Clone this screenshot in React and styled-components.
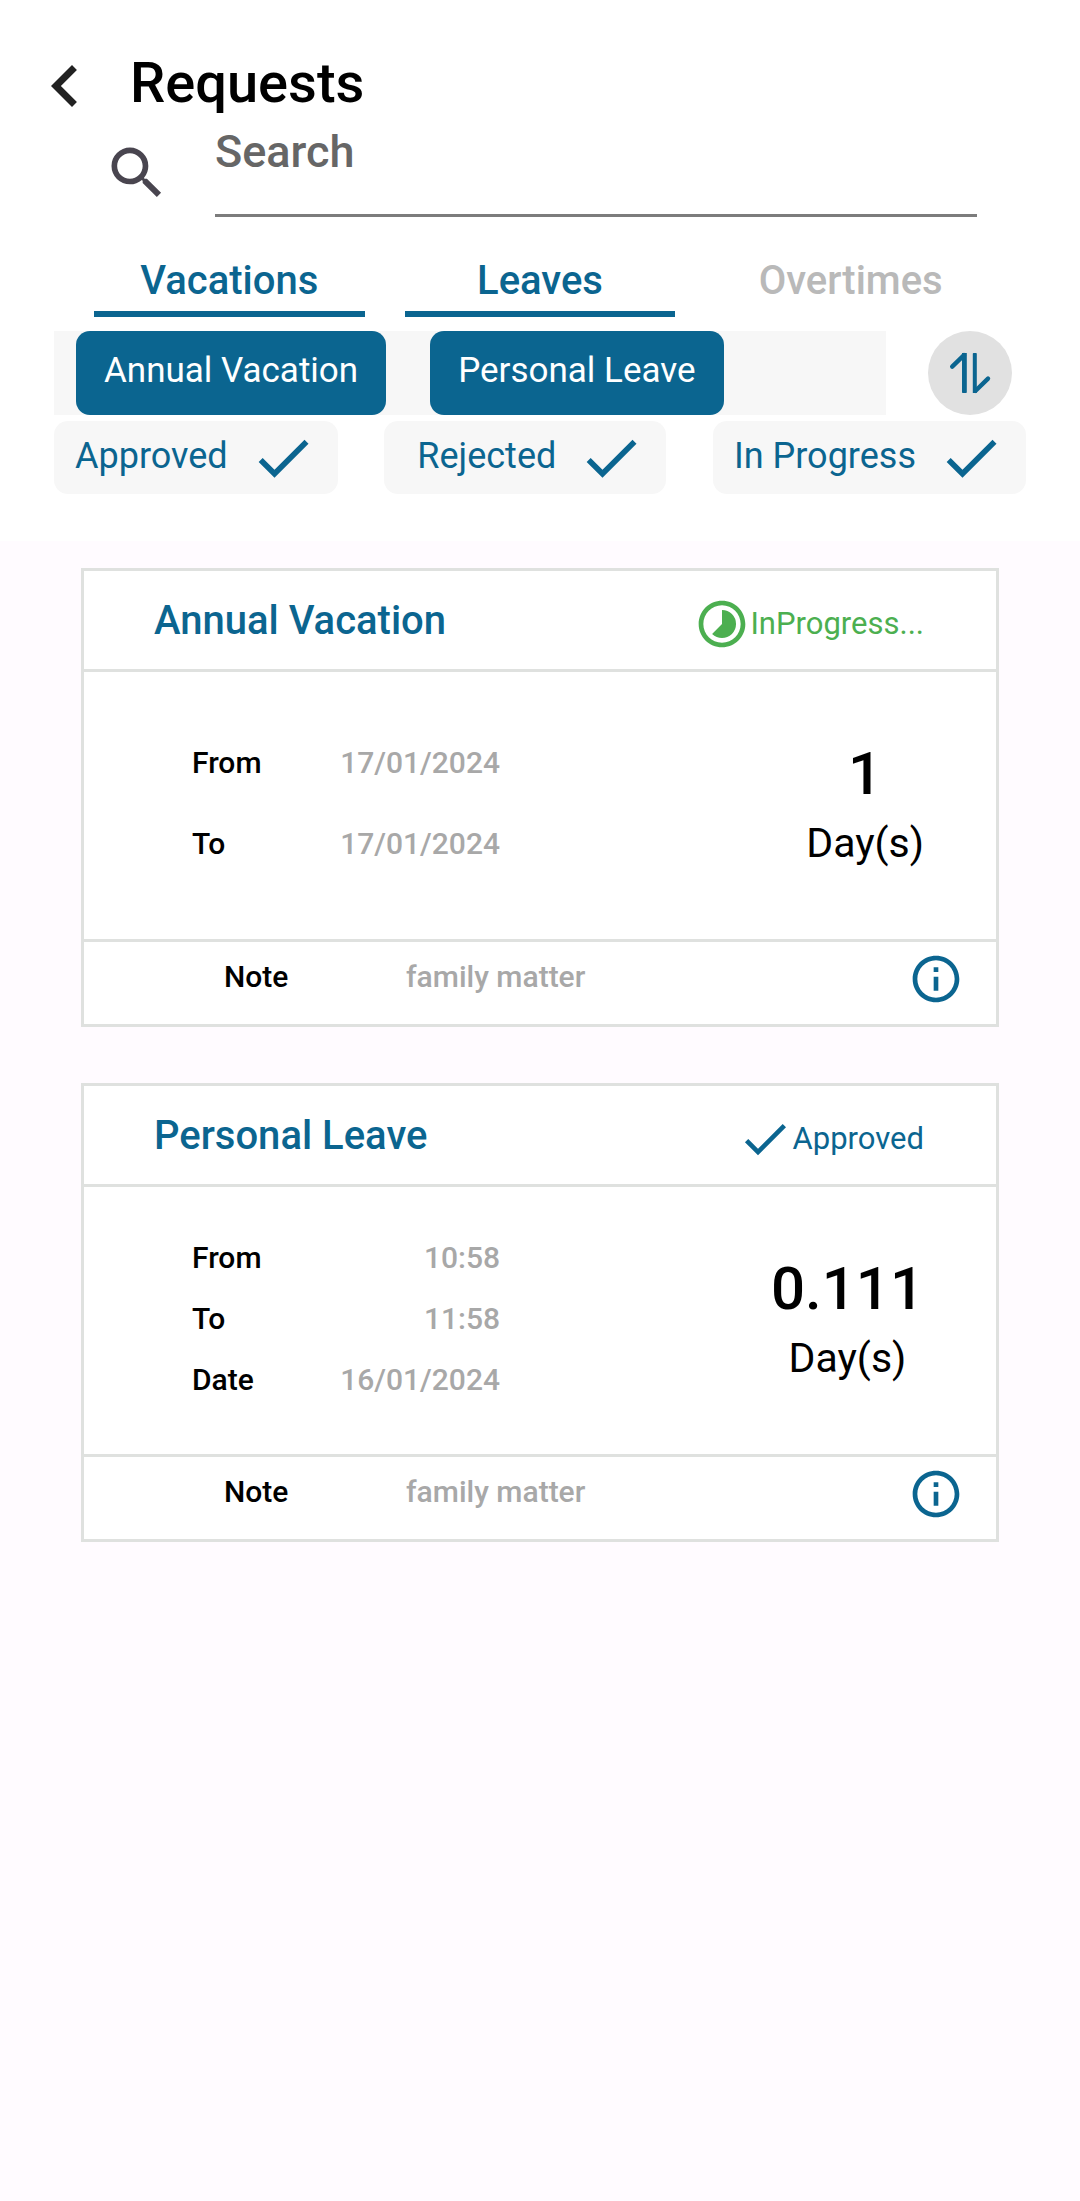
import React, { useState } from "react";
import styled, { createGlobalStyle } from "styled-components";

const BLUE = "#0b6590";

const GlobalStyle = createGlobalStyle`
  *, *::before, *::after { box-sizing: border-box; }
  body {
    margin: 0;
    background: #fffbff;
    color: #000;
    font-family: Roboto, "Liberation Sans", sans-serif;
  }
  button, input { font: inherit; color: inherit; }
  button { border: 0; padding: 0; background: none; cursor: pointer; }
  h1, h2, p, dl, dt, dd { margin: 0; font-weight: 500; }
`;

const Icon = styled.svg.attrs({ viewBox: "0 0 24 24", "aria-hidden": true })`
  display: block;
  flex: none;
  width: ${(p) => p.$size}px;
  height: ${(p) => p.$size}px;
  fill: currentColor;
`;

const BackIcon = () => (
  <Icon $size={84}>
    <path d="M15.41 7.41L14 6l-6 6 6 6 1.41-1.41L10.83 12z" />
  </Icon>
);

const SearchIcon = () => (
  <Icon $size={68}>
    <path d="M15.5 14h-.79l-.28-.27A6.471 6.471 0 0 0 16 9.5 6.5 6.5 0 1 0 9.5 16c1.61 0 3.09-.59 4.23-1.57l.27.28v.79l5 4.99L20.49 19l-4.99-5zm-6 0C7.01 14 5 11.99 5 9.5S7.01 5 9.5 5 14 7.01 14 9.5 11.99 14 9.5 14z" />
  </Icon>
);

const CheckIcon = ({ size }) => (
  <Icon $size={size}>
    <path d="M9 16.17L4.83 12l-1.42 1.41L9 19 21 7l-1.41-1.41z" />
  </Icon>
);

const TimelapseIcon = () => (
  <Icon $size={56}>
    <path d="M16.24 7.76A5.974 5.974 0 0 0 12 6v6l-4.24 4.24c2.34 2.34 6.14 2.34 8.49 0a5.99 5.99 0 0 0-.01-8.48zM12 2C6.48 2 2 6.48 2 12s4.48 10 10 10 10-4.48 10-10S17.52 2 12 2zm0 18c-4.42 0-8-3.58-8-8s3.58-8 8-8 8 3.58 8 8-3.58 8-8 8z" />
  </Icon>
);

const InfoIcon = () => (
  <Icon $size={56}>
    <path d="M11 7h2v2h-2zm0 4h2v6h-2zm1-9C6.48 2 2 6.48 2 12s4.48 10 10 10 10-4.48 10-10S17.52 2 12 2zm0 18c-4.41 0-8-3.59-8-8s3.59-8 8-8 8 3.59 8 8-3.59 8-8 8z" />
  </Icon>
);

const SortIcon = () => (
  <Icon $size={48}>
    <path d="M8 2h2.4v19.6a.4.4 0 0 1-.4.4H8.4a.4.4 0 0 1-.4-.4zM13.4 2.4a.4.4 0 0 1 .4-.4h1.2a.4.4 0 0 1 .4.4V22h-2z" />
    <path
      d="M9 3.1 3.1 8.8M14.8 20.9 21 14.8"
      fill="none"
      stroke="currentColor"
      strokeWidth="2.2"
      strokeLinecap="round"
    />
  </Icon>
);

const Header = styled.header`
  background: #fff;
  padding: 44px 0 47px;
`;

const TitleRow = styled.div`
  display: flex;
  align-items: flex-start;
  gap: 23px;
  padding-left: 23px;
`;

const BackButton = styled.button`
  color: #222;
`;

const Title = styled.h1`
  font-size: 56px;
  line-height: 78px;
`;

const SearchRow = styled.div`
  display: flex;
  align-items: center;
  gap: 44px;
  padding: 0 103px;
  color: #49454f;
`;

const SearchInput = styled.input`
  flex: 1;
  min-width: 0;
  height: 89px;
  padding: 0 0 40px;
  border: 0;
  border-bottom: 3px solid #7c7c7c;
  border-radius: 0;
  outline: 0;
  background: none;
  font-size: 45px;
  font-weight: 500;
  line-height: 46px;
  &::placeholder {
    color: #666;
    opacity: 1;
  }
`;

const Tabs = styled.div`
  display: grid;
  grid-template-columns: repeat(3, 1fr);
  gap: 40px;
  padding: 40px 94px 0;
`;

const Tab = styled.button`
  padding-bottom: 6px;
  border-bottom: 6px solid ${(p) => (p.$active ? BLUE : "transparent")};
  color: ${(p) => (p.$active ? BLUE : "#b9b9b9")};
  font-size: 40px;
  font-weight: 500;
  line-height: 48px;
`;

const TypeRow = styled.div`
  display: flex;
  gap: 42px;
  padding: 14px 68px 0 54px;
`;

const TypeStrip = styled.div`
  display: flex;
  flex: 1;
  gap: 44px;
  padding-left: 22px;
  background: #f7f7f7;
`;

const TypeChip = styled.button`
  padding: 0 28px 4px;
  border-radius: 14px;
  background: ${BLUE};
  color: #fff;
  font-size: 35px;
  line-height: 80px;
  white-space: nowrap;
`;

const SortButton = styled.button`
  display: grid;
  place-items: center;
  width: 84px;
  height: 84px;
  border-radius: 50%;
  background: #e1e1e1;
  color: ${BLUE};
`;

const StatusRow = styled.div`
  display: flex;
  justify-content: space-between;
  padding: 6px 54px 0;
`;

const StatusChip = styled.button`
  display: flex;
  align-items: center;
  justify-content: flex-end;
  gap: 21px;
  min-width: 282px;
  height: 73px;
  padding: 0 21px;
  border-radius: 14px;
  background: #f7f7f7;
  color: ${BLUE};
  font-size: 36px;
  line-height: 68px;
  white-space: nowrap;
`;

const ChipText = styled.span`
  padding-bottom: 4px;
`;

const List = styled.main`
  display: grid;
  gap: 56px;
  padding: 27px 81px 56px;
`;

const Card = styled.article`
  border: 3px solid #dfe1df;
  background: #fff;
`;

const CardHead = styled.div`
  display: flex;
  align-items: center;
  justify-content: space-between;
  height: 98px;
  padding: 2px 72px 0 70px;
`;

const CardTitle = styled.h2`
  color: ${BLUE};
  font-size: 40px;
  line-height: 50px;
`;

const Status = styled.p`
  display: flex;
  align-items: center;
  padding-top: 6px;
  color: ${(p) => p.$color};
  font-size: 31px;
  font-weight: 400;
  line-height: 50px;
`;

const CardBody = styled.div`
  display: flex;
  align-items: center;
  justify-content: space-between;
  height: 273px;
  padding: 0 72px 0 108px;
  border: solid #dfe1df;
  border-width: 3px 0;
`;

const Period = styled.dl`
  display: flex;
  flex-direction: column;
  justify-content: space-evenly;
  width: 308px;
  height: 212px;
  padding-bottom: 4px;
`;

const PeriodRow = styled.div`
  display: flex;
  justify-content: space-between;
  font-size: 30px;
  line-height: 36px;
`;

const Value = styled.dd`
  color: #a8a8a8;
`;

const Amount = styled.div`
  text-align: center;
`;

const Count = styled.p`
  font-size: 60px;
  line-height: 74px;
`;

const Unit = styled.p`
  font-size: 41px;
  font-weight: 400;
  line-height: 64px;
`;

const CardFoot = styled.div`
  display: flex;
  align-items: center;
  justify-content: space-between;
  height: 82px;
  padding: 0 32px 9px 140px;
`;

const Note = styled.dl`
  display: grid;
  grid-template-columns: 182px auto;
  padding-bottom: 4px;
  font-size: 30px;
  line-height: 36px;
`;

const InfoButton = styled.button`
  color: ${BLUE};
`;

const TABS = ["Vacations", "Leaves", "Overtimes"];
const TYPES = ["Annual Vacation", "Personal Leave"];
const STATUSES = ["Approved", "Rejected", "In Progress"];

const REQUESTS = [
  {
    title: "Annual Vacation",
    status: "InProgress...",
    color: "#4caf50",
    icon: <TimelapseIcon />,
    rows: [["From", "17/01/2024"], ["To", "17/01/2024"]],
    count: "1",
    note: "family matter",
  },
  {
    title: "Personal Leave",
    status: "Approved",
    color: BLUE,
    icon: <CheckIcon size={56} />,
    rows: [["From", "10:58"], ["To", "11:58"], ["Date", "16/01/2024"]],
    count: "0.111",
    note: "family matter",
  },
];

function RequestCard({ request }) {
  return (
    <Card>
      <CardHead>
        <CardTitle>{request.title}</CardTitle>
        <Status $color={request.color}>
          {request.icon}
          {request.status}
        </Status>
      </CardHead>
      <CardBody>
        <Period>
          {request.rows.map(([label, value]) => (
            <PeriodRow key={label}>
              <dt>{label}</dt>
              <Value>{value}</Value>
            </PeriodRow>
          ))}
        </Period>
        <Amount>
          <Count>{request.count}</Count>
          <Unit>Day(s)</Unit>
        </Amount>
      </CardBody>
      <CardFoot>
        <Note>
          <dt>Note</dt>
          <Value>{request.note}</Value>
        </Note>
        <InfoButton type="button" aria-label="Details">
          <InfoIcon />
        </InfoButton>
      </CardFoot>
    </Card>
  );
}

export default function App() {
  const [active, setActive] = useState(["Vacations", "Leaves"]);
  const toggle = (name) =>
    setActive((list) =>
      list.includes(name) ? list.filter((n) => n !== name) : [...list, name]
    );

  return (
    <>
      <GlobalStyle />
      <Header>
        <TitleRow>
          <BackButton type="button" aria-label="Back">
            <BackIcon />
          </BackButton>
          <Title>Requests</Title>
        </TitleRow>
        <SearchRow>
          <SearchIcon />
          <SearchInput type="text" placeholder="Search" aria-label="Search" />
        </SearchRow>
        <Tabs>
          {TABS.map((name) => (
            <Tab
              key={name}
              type="button"
              aria-pressed={active.includes(name)}
              $active={active.includes(name)}
              onClick={() => toggle(name)}
            >
              {name}
            </Tab>
          ))}
        </Tabs>
        <TypeRow>
          <TypeStrip>
            {TYPES.map((name) => (
              <TypeChip key={name} type="button">
                {name}
              </TypeChip>
            ))}
          </TypeStrip>
          <SortButton type="button" aria-label="Sort">
            <SortIcon />
          </SortButton>
        </TypeRow>
        <StatusRow>
          {STATUSES.map((name) => (
            <StatusChip key={name} type="button" aria-pressed="true">
              <ChipText>{name}</ChipText>
              <CheckIcon size={68} />
            </StatusChip>
          ))}
        </StatusRow>
      </Header>
      <List>
        {REQUESTS.map((request) => (
          <RequestCard key={request.title} request={request} />
        ))}
      </List>
    </>
  );
}
